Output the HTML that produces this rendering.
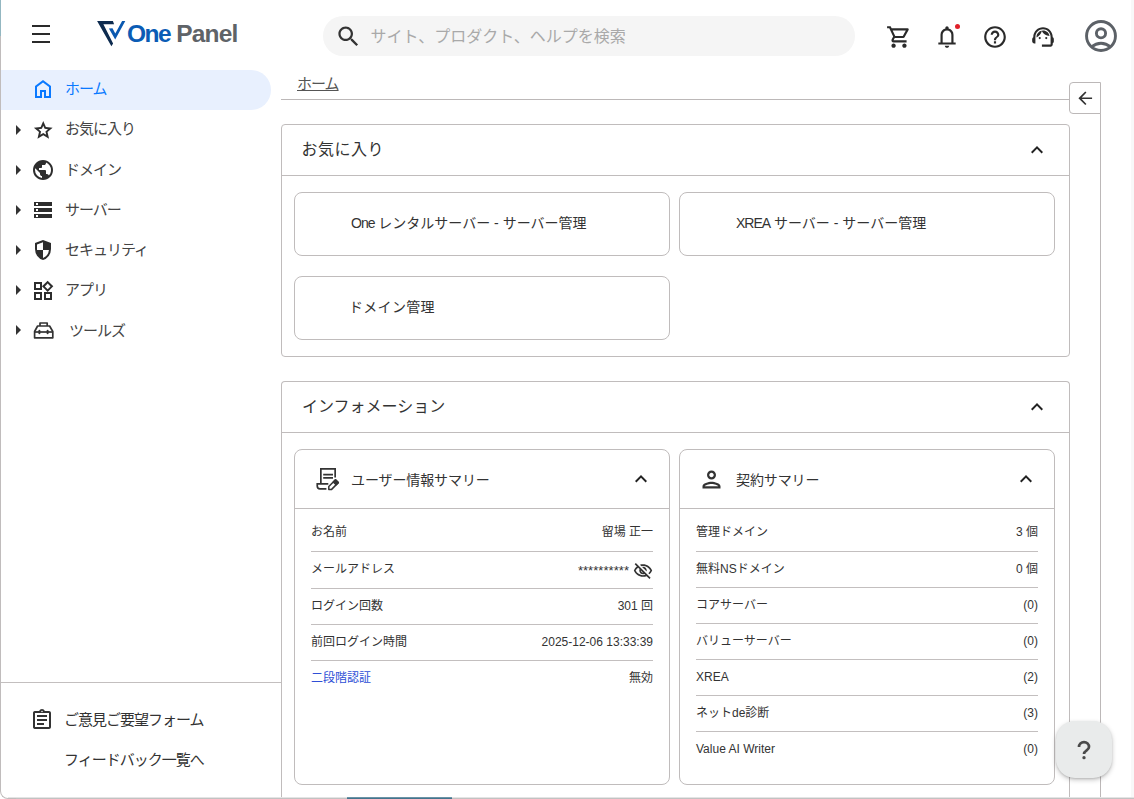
<!DOCTYPE html>
<html lang="ja">
<head>
<meta charset="utf-8">
<title>One Panel</title>
<style>
*{box-sizing:border-box;margin:0;padding:0}
html,body{width:1134px;height:799px;overflow:hidden;background:#fff}
body{font-family:"Liberation Sans","Noto Sans CJK JP",sans-serif;color:#333;font-size:14px;position:relative}
.abs{position:absolute}
svg{display:block}
/* window frame */
#frame-l{left:0;top:0;width:1px;height:790px;background:linear-gradient(#93b7c1 0,#93b7c1 36px,#c0bcbc 36px)}
#frame-b{left:8px;top:798px;width:1126px;height:1px;background:#c2c2c2}
#frame-b2{left:8px;top:797px;width:1126px;height:1px;background:#e4e4e4}
#frame-c{left:0;top:783px;width:16px;height:16px;border-left:1px solid #c0bcbc;border-bottom:1px solid #c0bcbc;border-bottom-left-radius:8px}
#frame-r{left:1131px;top:0;width:3px;height:797px;background:#f8f8f8}
#tabbar{left:347px;top:797px;width:105px;height:2px;background:linear-gradient(#7fa3b3,#2f6480)}
/* header */
#menu{left:32px;top:25px;width:18px;height:18px}
#menu i{position:absolute;left:0;width:18px;height:2px;background:#2a2a2a}
#logo{left:97px;top:20px}
#logotext{left:127px;top:19px;font-weight:bold;font-size:24.500px;line-height:30px;letter-spacing:-1.5px;white-space:nowrap}
#logotext .o{color:#0b5cb5}
#logotext .p{color:#5f6368;margin-left:6px;letter-spacing:-.8px}
#search{left:323px;top:16px;width:532px;height:40px;border-radius:20px;background:#f5f5f5}
#search svg{position:absolute;left:11.600px;top:7px}
#search span{position:absolute;left:47.500px;top:1px;line-height:40px;font-size:16px;color:#a9a9a9;white-space:nowrap}
.hic{fill:#2a2a2a}
/* sidebar */
#active{left:1px;top:70px;width:270px;height:40px;background:#e8f0fe;border-radius:0 20px 20px 0}
.nav{left:0;width:271px;height:40px}
.nav .tri{position:absolute;left:6px;top:var(--it)}
.nav .ic{position:absolute;left:31px;top:var(--it);fill:#2d2d2d}
.nav .lb{position:absolute;left:65px;top:0;line-height:38px;font-size:15px;letter-spacing:-1px;color:#444;white-space:nowrap}
#sdiv{left:1px;top:682px;width:280px;height:1px;background:#c3bfbf}
/* main */
#bc{left:297px;top:73px;font-size:15px;line-height:22px;letter-spacing:-1px;color:#555;text-decoration:underline;text-decoration-thickness:1px;text-underline-offset:1px}
#bcline{left:281px;top:99px;width:788px;height:1px;background:#bcb8b8}
#collapse{left:1069px;top:82px;width:32px;height:32px;border:1px solid #bcb8b8;border-radius:4px 0 0 4px;background:#fff}
#vline{left:1100px;top:113px;width:1px;height:685px;background:#bcb8b8}
.sec{left:281px;width:789px;border:1px solid #c0bcbc;border-radius:4px;background:#fff}
.sec .hd{height:51px;border-bottom:1px solid #c0bcbc;position:relative}
.sec .hd span{position:absolute;left:20px;top:0;line-height:49px;font-size:16px;color:#333}
.sec .hd svg{position:absolute;right:20px;top:12.500px}
.fav{width:376px;height:64px;border:1px solid #c0bcbc;border-radius:8px;background:#fff;font-size:14px;line-height:60px;padding-left:56px;color:#333;white-space:nowrap}
.fav .la{letter-spacing:-1px}
.card{top:449px;width:376px;height:336px;border:1px solid #c0bcbc;border-radius:8px;background:#fff}
.card .ch{height:59px;border-bottom:1px solid #c0bcbc;position:relative}
.card .ch .t{position:absolute;left:56px;top:1px;line-height:59px;font-size:14px;letter-spacing:-.1px;color:#333;white-space:nowrap}
.card .ch .ci{position:absolute;left:20px;top:17px}
.card .ch .ex{position:absolute;right:16px;top:17px}
.rows{margin:0 16px}
.row{display:flex;justify-content:space-between;align-items:center;font-size:12px;line-height:16px;color:#333;border-top:1px solid #c3bfbf;white-space:nowrap;padding-bottom:2px}
.row:first-child{border-top:none;padding-bottom:0;padding-top:4px}
.row a{color:#2f4fd6;text-decoration:none}
#fab{left:1056px;top:721px;width:56px;height:57px;border-radius:19px;background:#e9ebeb;box-shadow:0 2px 5px rgba(0,0,0,.22),0 1px 2px rgba(0,0,0,.12)}
</style>
</head>
<body>
<!-- HEADER -->
<div class="abs" id="menu"><i style="top:0"></i><i style="top:8px"></i><i style="top:16px"></i></div>
<svg class="abs" id="logo" width="30" height="28" viewBox="0 0 30 28"><path d="M0.1 1.1 L15.9 1.1 L17.1 4.3 L6.4 4.3 L16.1 23.6 L14.4 26.2 Z" fill="#0d2b4f"/><path d="M11.9 8.4 L15.5 8.2 L18.3 13.5 L25.1 1.1 L28.3 1.1 L18.2 19.4 Z" fill="#0a58b0"/></svg>
<div class="abs" id="logotext"><span class="o">One</span><span class="p">Panel</span></div>
<div class="abs" id="search">
  <svg width="27" height="27" viewBox="0 0 24 24"><path fill="#333" d="M15.5 14h-.79l-.28-.27C15.41 12.59 16 11.11 16 9.5 16 5.91 13.09 3 9.500 3S3 5.910 3 9.500 5.910 16 9.500 16c1.610 0 3.090-.59 4.230-1.570l.27.28v.79l5 4.990L20.490 19l-4.990-5zm-6 0C7.010 14 5 11.990 5 9.500S7.010 5 9.500 5 14 7.010 14 9.500 11.990 14 9.500 14z"/></svg>
  <span>サイト、プロダクト、ヘルプを検索</span>
</div>
<svg class="abs hic" style="left:886px;top:24px" width="26" height="26" viewBox="0 0 24 24"><path d="M15.550 13c.75 0 1.410-.41 1.750-1.030l3.580-6.490c.37-.66-.11-1.480-.87-1.480H5.210l-.94-2H1v2h2l3.600 7.590-1.350 2.440C4.520 15.370 5.480 17 7 17h12v-2H7l1.100-2h7.450zM6.160 6h12.150l-2.760 5H8.530L6.160 6zM7 18c-1.100 0-1.990.9-1.990 2S5.900 22 7 22s2-.9 2-2-.9-2-2-2zm10 0c-1.100 0-1.990.9-1.990 2s.89 2 1.990 2 2-.9 2-2-.9-2-2-2z"/></svg>
<svg class="abs hic" style="left:933.800px;top:23.800px" width="26" height="26" viewBox="0 -960 960 960"><path d="M160-200v-80h80v-280q0-83 50-147.500T420-792v-28q0-25 17.500-42.500T480-880q25 0 42.500 17.500T540-820v28q80 20 130 84.500T720-560v280h80v80H160Zm320-300Zm0 420q-33 0-56.500-23.500T400-160h160q0 33-23.500 56.500T480-80ZM320-280h320v-280q0-66-47-113t-113-47q-66 0-113 47t-47 113v280Z"/></svg>
<div class="abs" style="left:955px;top:24px;width:5px;height:5px;border-radius:50%;background:#e0202a"></div>
<svg class="abs hic" style="left:982px;top:23.6px" width="26" height="26" viewBox="0 0 24 24"><path d="M11 18h2v-2h-2v2zm1-16C6.480 2 2 6.480 2 12s4.480 10 10 10 10-4.480 10-10S17.520 2 12 2zm0 18c-4.410 0-8-3.590-8-8s3.590-8 8-8 8 3.590 8 8-3.590 8-8 8zm0-14c-2.210 0-4 1.790-4 4h2c0-1.100.9-2 2-2s2 .9 2 2c0 2-3 1.750-3 5h2c0-2.250 3-2.500 3-5 0-2.210-1.790-4-4-4z"/></svg>
<svg class="abs hic" style="left:1030px;top:24px" width="26" height="26" viewBox="0 0 24 24"><path d="M21 12.220C21 6.730 16.740 3 12 3c-4.690 0-9 3.650-9 9.280-.6.340-1 .98-1 1.720v2c0 1.100.9 2 2 2h1v-6.100c0-3.870 3.130-7 7-7s7 3.130 7 7V19h-8v2h8c1.100 0 2-.9 2-2v-1.220c.59-.31 1-.92 1-1.640v-2.300c0-.7-.41-1.310-1-1.620z"/><circle cx="9" cy="13" r="1"/><circle cx="15" cy="13" r="1"/><path d="M18 11.030C17.520 8.180 15.040 6 12.050 6c-3.030 0-6.290 2.510-6.030 6.450 2.470-1.010 4.330-3.210 4.860-5.890 1.310 2.630 4 4.440 7.120 4.470z"/></svg>
<svg class="abs" style="left:1082px;top:16.700px" width="38" height="38" viewBox="0 0 38 38" fill="none" stroke="#5c6167" stroke-width="2.900"><circle cx="19" cy="19" r="14.450"/><circle cx="19" cy="16.300" r="4.600"/><path d="M9 30.200Q19 22.200 29 30.200"/></svg>

<!-- SIDEBAR -->
<div class="abs" id="active"></div>
<div class="abs nav" style="top:70px;--it:6.85px">
  <svg class="ic" style="fill:#0a79ff" width="24" height="24" viewBox="0 -960 960 960"><path d="M240-200h120v-240h240v240h120v-360L480-740 240-560v360Zm-80 80v-480l320-240 320 240v480H520v-240h-80v240H160Zm320-350Z"/></svg>
  <span class="lb" style="color:#0a79ff">ホーム</span>
</div>
<div class="abs nav" style="top:110px;--it:7.6px">
  <svg class="tri" width="24" height="24" viewBox="0 0 24 24"><path fill="#333" d="M10 17l5-5-5-5v10z"/></svg>
  <svg class="ic" style="left:32.250px;top:8.800px" width="22.500" height="22.500" viewBox="0 -960 960 960"><path d="m354-287 126-76 126 77-33-144 111-96-146-13-58-136-58 135-146 13 111 97-33 143ZM233-120l65-281L80-590l288-25 112-265 112 265 288 25-218 189 65 281-247-149-247 149Zm247-350Z"/></svg>
  <span class="lb">お気に入り</span>
</div>
<div class="abs nav" style="top:150.5px;--it:7.4px">
  <svg class="tri" width="24" height="24" viewBox="0 0 24 24"><path fill="#333" d="M10 17l5-5-5-5v10z"/></svg>
  <svg class="ic"  width="24" height="24" viewBox="0 -960 960 960"><path d="M480-80q-83 0-156-31.500T197-197q-54-54-85.500-127T80-480q0-83 31.500-156T197-763q54-54 127-85.500T480-880q83 0 156 31.500T763-763q54 54 85.500 127T880-480q0 83-31.500 156T763-197q-54 54-127 85.500T480-80Zm-40-82v-78q-33 0-56.500-23.500T360-320v-40L168-552q-3 18-5.500 36t-2.500 36q0 121 79.500 212T440-162Zm276-102q20-22 36-47.500t26.500-53q10.500-27.500 16-56.500t5.500-59q0-98-54.500-179T600-776v16q0 33-23.500 56.500T520-680h-80v80q0 17-11.500 28.500T400-560h-80v80h240q17 0 28.500 11.500T600-440v120h40q26 0 47 15.500t29 40.500Z"/></svg>
  <span class="lb">ドメイン</span>
</div>
<div class="abs nav" style="top:190.6px;--it:7.4px">
  <svg class="tri" width="24" height="24" viewBox="0 0 24 24"><path fill="#333" d="M10 17l5-5-5-5v10z"/></svg>
  <svg class="ic"  width="24" height="24" viewBox="0 -960 960 960"><path d="M120-160v-160h720v160H120Zm80-40h80v-80h-80v80Zm-80-440v-160h720v160H120Zm80-40h80v-80h-80v80Zm-80 280v-160h720v160H120Zm80-40h80v-80h-80v80Z"/></svg>
  <span class="lb">サーバー</span>
</div>
<div class="abs nav" style="top:230.9px;--it:7.1px">
  <svg class="tri" width="24" height="24" viewBox="0 0 24 24"><path fill="#333" d="M10 17l5-5-5-5v10z"/></svg>
  <svg class="ic"  width="24" height="24" viewBox="0 -960 960 960"><path d="M480-80q-139-35-229.500-159.500T160-516v-244l320-120 320 120v244q0 152-90.500 276.500T480-80Zm0-84q97-30 162-118.500T718-480H480v-315l-240 90v207q0 7 2 18h238v316Z"/></svg>
  <span class="lb">セキュリティ</span>
</div>
<div class="abs nav" style="top:271.1px;--it:7.4px">
  <svg class="tri" width="24" height="24" viewBox="0 0 24 24"><path fill="#333" d="M10 17l5-5-5-5v10z"/></svg>
  <svg class="ic" style="top:8.100px" width="24" height="24" viewBox="0 -960 960 960"><path d="M666-440 440-666l226-226 226 226-226 226Zm-546-80v-320h320v320H120Zm400 400v-320h320v320H520Zm-400 0v-320h320v320H120Zm80-480h160v-160H200v160Zm467 48 113-113-113-113-113 113 113 113Zm-67 352h160v-160H600v160Zm-400 0h160v-160H200v160Z"/></svg>
  <span class="lb">アプリ</span>
</div>
<div class="abs nav" style="top:311.8px;--it:6.6px">
  <svg class="tri" width="24" height="24" viewBox="0 0 24 24"><path fill="#333" d="M10 17l5-5-5-5v10z"/></svg>
  <svg class="ic" style="left:30px;fill:none" width="26" height="24" viewBox="0 0 26 24" fill="none" stroke="#333" stroke-width="1.7" stroke-linejoin="round"><path d="M10 8V5h7.200v3"/><path d="M7.600 8h12l3.200 5.500v6.300H4.600V13.500z"/><path d="M4.600 14h18.200"/><path d="M9.400 12.700v2.600M17.600 12.700v2.600" stroke-width="2" stroke-linecap="round"/></svg>
  <span class="lb" style="left:69px">ツールズ</span>
</div>
<div class="abs" id="sdiv"></div>
<svg class="abs" style="left:30px;top:707.700px" width="24" height="24" viewBox="0 0 24 24"><path fill="#333" d="M7 15h7v2H7zm0-4h10v2H7zm0-4h10v2H7zm12-4h-4.180C14.400 1.840 13.300 1 12 1c-1.300 0-2.400.84-2.820 2H5c-.14 0-.27.010-.4.040-.39.080-.74.280-1.010.55-.18.180-.33.4-.43.640-.1.230-.16.490-.16.770v14c0 .27.060.54.160.78s.25.450.43.640c.27.270.62.470 1.010.55.130.02.260.03.4.03h14c1.100 0 2-.9 2-2V5c0-1.100-.9-2-2-2zm-7-.25c.41 0 .75.340.75.750s-.34.750-.75.750-.75-.34-.75-.75.340-.75.750-.75zM19 19H5V5h14v14z"/></svg>
<div class="abs" style="left:64px;top:701px;line-height:38px;font-size:15px;letter-spacing:-1px;color:#333;white-space:nowrap">ご意見ご要望フォーム</div>
<div class="abs" style="left:64px;top:741px;line-height:38px;font-size:15px;letter-spacing:-1px;color:#333;white-space:nowrap">フィードバック一覧へ</div>

<!-- MAIN -->
<div class="abs" id="bc">ホーム</div>
<div class="abs" id="bcline"></div>
<div class="abs" id="vline"></div>
<div class="abs" id="collapse"><svg style="position:absolute;left:5px;top:4.650px" width="20.500" height="20.500" viewBox="0 0 24 24"><path fill="#333" d="M20 11H7.830l5.590-5.590L12 4l-8 8 8 8 1.410-1.410L7.830 13H20v-2z"/></svg></div>

<div class="abs sec" style="top:124px;height:233px">
  <div class="hd"><span style="letter-spacing:.5px;left:19.500px">お気に入り</span><svg width="24" height="24" viewBox="0 0 24 24"><path fill="#222" d="M12 8l-6 6 1.410 1.410L12 10.830l4.590 4.580L18 14z"/></svg></div>
</div>
<div class="abs fav" style="left:294px;top:192px"><span class="la">One</span> レンタルサーバー - サーバー管理</div>
<div class="abs fav" style="left:679px;top:192px"><span class="la">XREA</span> サーバー - サーバー管理</div>
<div class="abs fav" style="left:294px;top:276px;padding-left:54px;letter-spacing:.3px">ドメイン管理</div>

<div class="abs sec" style="top:381px;height:430px;border-bottom:none;border-radius:4px 4px 0 0">
  <div class="hd"><span>インフォメーション</span><svg width="24" height="24" viewBox="0 0 24 24"><path fill="#222" d="M12 8l-6 6 1.410 1.410L12 10.830l4.590 4.580L18 14z"/></svg></div>
</div>

<div class="abs card" style="left:294px">
  <div class="ch">
    <svg class="ci" style="left:19px;top:16px" width="27" height="27" viewBox="0 0 27 27" fill="none" stroke="#333" stroke-width="1.700"><path d="M6.850 17.300V2.850H21.150V11.500"/><path d="M9.200 8.550H19M9.200 11.950H19"/><path d="M14.300 17.850H3.250V20Q3.250 22.850 6 22.850H12.400"/><path d="M14.800 23.400V20.500L21.500 13.800L24.300 16.600L17.600 23.400Z" stroke-width="1.500" stroke-linejoin="round"/><path d="M19.300 16L21.500 13.800L24.300 16.600L22.100 18.800Z" fill="#333" stroke-width="1.500" stroke-linejoin="round"/></svg>
    <span class="t">ユーザー情報サマリー</span>
    <svg class="ex" width="24" height="24" viewBox="0 0 24 24"><path fill="#222" d="M12 8l-6 6 1.410 1.410L12 10.830l4.590 4.580L18 14z"/></svg>
  </div>
  <div class="rows">
    <div class="row" style="height:42px"><span>お名前</span><span>留場 正一</span></div>
    <div class="row" style="height:37px"><span>メールアドレス</span><span style="display:flex;align-items:center"><span style="font-size:13px;position:relative;top:2px;letter-spacing:.05px">**********</span><svg style="margin-left:4px;position:relative;top:1.700px" width="20" height="20" viewBox="0 0 24 24"><path fill="#333" d="M12 6c3.790 0 7.170 2.130 8.820 5.500-.59 1.220-1.420 2.270-2.410 3.120l1.410 1.410c1.390-1.230 2.490-2.770 3.180-4.530C21.270 7.110 17 4 12 4c-1.270 0-2.490.2-3.640.57l1.650 1.650C10.660 6.090 11.320 6 12 6zm-1.070 1.140L13 9.210c.57.250 1.030.71 1.280 1.280l2.070 2.070c.08-.34.140-.7.140-1.070C16.500 9.010 14.480 7 12 7c-.37 0-.72.050-1.070.14zM2.010 3.870l2.680 2.680C3.060 7.830 1.770 9.530 1 11.500 2.730 15.890 7 19 12 19c1.520 0 2.980-.29 4.320-.82l3.420 3.420 1.410-1.410L3.420 2.450 2.010 3.870zm7.500 7.500l2.610 2.610c-.4.010-.8.020-.12.020-1.380 0-2.500-1.120-2.500-2.500 0-.5.010-.8.010-.13zm-3.400-3.400l1.750 1.750c-.23.550-.36 1.150-.36 1.780 0 2.480 2.020 4.500 4.500 4.500.63 0 1.230-.13 1.770-.36l.98.980c-.88.240-1.800.38-2.750.38-3.790 0-7.170-2.130-8.820-5.500.7-1.430 1.720-2.610 2.930-3.530z"/></svg></span></div>
    <div class="row" style="height:36px"><span>ログイン回数</span><span>301 回</span></div>
    <div class="row" style="height:36px"><span>前回ログイン時間</span><span>2025-12-06 13:33:39</span></div>
    <div class="row" style="height:36px"><a>二段階認証</a><span>無効</span></div>
  </div>
</div>

<div class="abs card" style="left:679px">
  <div class="ch">
    <svg class="ci" style="left:17.800px;top:15.500px" width="27" height="27" viewBox="0 0 24 24"><path fill="#333" d="M12 6c1.100 0 2 .9 2 2s-.9 2-2 2-2-.9-2-2 .9-2 2-2m0 10c2.700 0 5.800 1.290 6 2H6c.23-.72 3.310-2 6-2m0-12C9.790 4 8 5.790 8 8s1.790 4 4 4 4-1.790 4-4-1.790-4-4-4zm0 10c-2.670 0-8 1.340-8 4v2h16v-2c0-2.660-5.330-4-8-4z"/></svg>
    <span class="t">契約サマリー</span>
    <svg class="ex" width="24" height="24" viewBox="0 0 24 24"><path fill="#222" d="M12 8l-6 6 1.410 1.410L12 10.830l4.590 4.580L18 14z"/></svg>
  </div>
  <div class="rows">
    <div class="row" style="height:42px"><span>管理ドメイン</span><span>3 個</span></div>
    <div class="row" style="height:36px"><span>無料NSドメイン</span><span>0 個</span></div>
    <div class="row" style="height:36px"><span>コアサーバー</span><span>(0)</span></div>
    <div class="row" style="height:36px"><span>バリューサーバー</span><span>(0)</span></div>
    <div class="row" style="height:36px"><span>XREA</span><span>(2)</span></div>
    <div class="row" style="height:36px"><span>ネットde診断</span><span>(3)</span></div>
    <div class="row" style="height:36px"><span>Value AI Writer</span><span>(0)</span></div>
  </div>
</div>

<div class="abs" id="fab"><svg style="position:absolute;left:16px;top:17px" width="24" height="24" viewBox="0 0 24 24" fill="none" stroke="#4a4a4a" stroke-width="2.700"><path d="M7 9.100A5 5 0 0 1 17 9.100C17 12.300 12 12.300 12 16"/><circle cx="12" cy="19.700" r="1.650" fill="#4a4a4a" stroke="none"/></svg></div>

<!-- window frame -->
<div class="abs" id="frame-l"></div>
<div class="abs" id="frame-r"></div>
<div class="abs" id="frame-b2"></div>
<div class="abs" id="frame-b"></div>
<div class="abs" id="frame-c"></div>
<div class="abs" id="tabbar"></div>
</body>
</html>
